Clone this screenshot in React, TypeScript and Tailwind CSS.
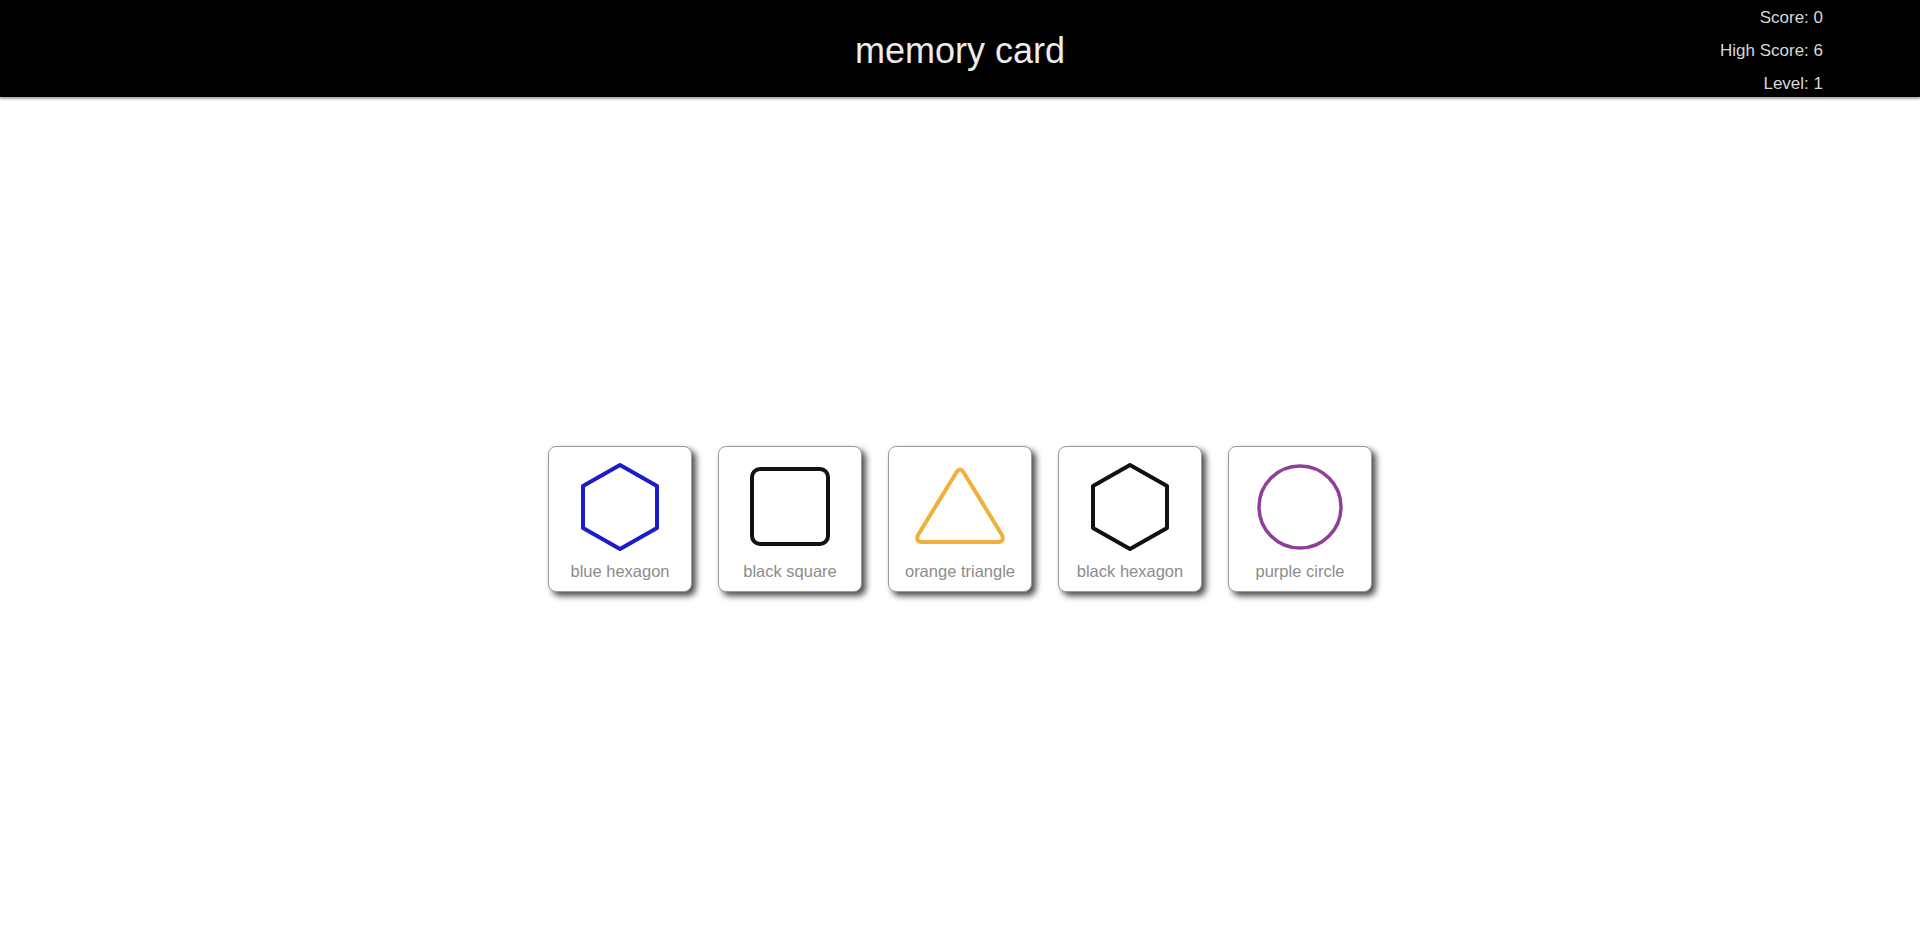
type Shape = "hexagon" | "square" | "triangle" | "circle";

interface CardData {
  label: string;
  shape: Shape;
  color: string;
}

const cards: CardData[] = [
  { label: "blue hexagon", shape: "hexagon", color: "#1c1cc8" },
  { label: "black square", shape: "square", color: "#111111" },
  { label: "orange triangle", shape: "triangle", color: "#f0b13a" },
  { label: "black hexagon", shape: "hexagon", color: "#111111" },
  { label: "purple circle", shape: "circle", color: "#8e3f98" },
];

function ShapeIcon({ shape, color }: { shape: Shape; color: string }) {
  return (
    <svg width="96" height="90" viewBox="0 0 96 90" fill="none">
      {shape === "hexagon" && (
        <path
          d="M48 3 L85 24 L85 66 L48 87 L11 66 L11 24 Z"
          stroke={color}
          strokeWidth="4"
          strokeLinejoin="round"
        />
      )}
      {shape === "square" && (
        <rect x="10" y="7" width="76" height="75" rx="8" stroke={color} strokeWidth="4" />
      )}
      {shape === "triangle" && (
        <path
          d="M44 11 Q48 4 52 11 L90 73 Q93 80 85 80 L11 80 Q3 80 6 73 Z"
          stroke={color}
          strokeWidth="4"
          strokeLinejoin="round"
        />
      )}
      {shape === "circle" && <circle cx="48" cy="45" r="41" stroke={color} strokeWidth="3.5" />}
    </svg>
  );
}

function Card({ card }: { card: CardData }) {
  return (
    <div className="flex h-[146px] w-[144px] flex-col items-center rounded-[8px] border border-[#9a9a9a] bg-white pt-[15px] shadow-[4px_4px_6px_rgba(0,0,0,0.7)]">
      <ShapeIcon shape={card.shape} color={card.color} />
      <span className="mt-[11px] text-[16.5px] leading-none text-[#8c8c8c]">{card.label}</span>
    </div>
  );
}

export default function App() {
  return (
    <div className="min-h-[935px] bg-white font-['Liberation_Sans',Arial,sans-serif]">
      <header className="relative flex h-[97px] items-center justify-center bg-black shadow-[0_2px_2px_rgba(0,0,0,0.35)]">
        <h1 className="pt-[5px] text-[36px] font-light leading-none text-[#ececec]">memory card</h1>
        <div className="absolute right-[97px] top-[8px] flex flex-col items-end gap-[14px] text-[17px] leading-[19px] text-[#d8d8d8]">
          <span>Score: 0</span>
          <span>High Score: 6</span>
          <span>Level: 1</span>
        </div>
      </header>
      <main className="flex justify-center gap-[26px] pt-[349px]">
        {cards.map((card) => (
          <Card key={card.label} card={card} />
        ))}
      </main>
    </div>
  );
}
